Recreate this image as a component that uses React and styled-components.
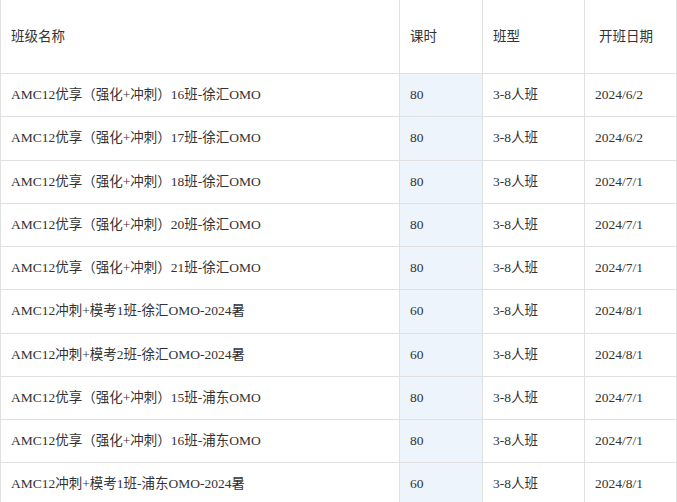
import styled, { createGlobalStyle } from "styled-components";

const GlobalStyle = createGlobalStyle`
  body {
    margin: 0;
    background: #fff;
    font-family: "Liberation Serif", "Noto Sans CJK SC", serif;
  }
`;

const Table = styled.table`
  width: 676px;
  border-collapse: collapse;
  table-layout: fixed;
  font-size: 13.5px;
  line-height: 20px;
  color: #333;
`;

const Th = styled.th`
  height: 70px;
  padding: 0 0 3px ${(p) => p.$pad || 10}px;
  text-align: left;
  font-weight: normal;
  font-family: "Noto Sans CJK SC", sans-serif;
  border: 1px solid #e0e0e0;
  border-top: none;
`;

const Td = styled.td`
  height: 42.25px;
  padding: 0 0 0 10px;
  border: 1px solid #e0e0e0;
  background: ${(p) => (p.$hl ? "#edf4fb" : "#fff")};
  white-space: nowrap;
  vertical-align: middle;
`;

const rows = [
  ["AMC12优享（强化+冲刺）16班-徐汇OMO", "80", "2024/6/2"],
  ["AMC12优享（强化+冲刺）17班-徐汇OMO", "80", "2024/6/2"],
  ["AMC12优享（强化+冲刺）18班-徐汇OMO", "80", "2024/7/1"],
  ["AMC12优享（强化+冲刺）20班-徐汇OMO", "80", "2024/7/1"],
  ["AMC12优享（强化+冲刺）21班-徐汇OMO", "80", "2024/7/1"],
  ["AMC12冲刺+模考1班-徐汇OMO-2024暑", "60", "2024/8/1"],
  ["AMC12冲刺+模考2班-徐汇OMO-2024暑", "60", "2024/8/1"],
  ["AMC12优享（强化+冲刺）15班-浦东OMO", "80", "2024/7/1"],
  ["AMC12优享（强化+冲刺）16班-浦东OMO", "80", "2024/7/1"],
  ["AMC12冲刺+模考1班-浦东OMO-2024暑", "60", "2024/8/1"],
];

const App = () => {
  return (
    <>
      <GlobalStyle />
      <Table>
        <colgroup>
          <col style={{ width: 399 }} />
          <col style={{ width: 83 }} />
          <col style={{ width: 102 }} />
          <col style={{ width: 92 }} />
        </colgroup>
        <thead>
          <tr>
            <Th>班级名称</Th>
            <Th>课时</Th>
            <Th>班型</Th>
            <Th $pad={14}>开班日期</Th>
          </tr>
        </thead>
        <tbody>
          {rows.map(([name, hours, date]) => (
            <tr key={name}>
              <Td>{name}</Td>
              <Td $hl>{hours}</Td>
              <Td>3-8人班</Td>
              <Td>{date}</Td>
            </tr>
          ))}
        </tbody>
      </Table>
    </>
  );
};

export default App;
